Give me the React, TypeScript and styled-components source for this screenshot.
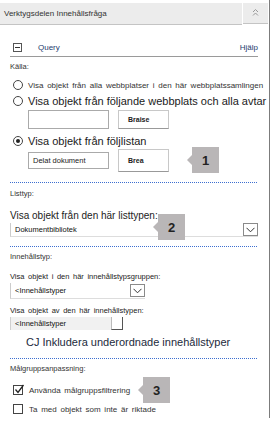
import React from "react";
import styled, { createGlobalStyle } from "styled-components";

const Global = createGlobalStyle`
  body {
    margin: 0;
    background: #fff;
    font-family: "Liberation Sans", Arial, sans-serif;
    color: #222;
  }
`;

const Panel = styled.div`
  width: 270px;
  height: 418px;
  border-right: 1px solid #7c7c7c;
  padding-top: 3px;
  box-sizing: border-box;
`;

const Header = styled.div`
  display: flex;
  gap: 1px;
  margin-right: 1px;
`;

const HeaderTitle = styled.div`
  flex: 1;
  height: 21px;
  background: #ececec;
  border-bottom: 1px solid #c4c4c4;
  display: flex;
  align-items: center;
  padding-left: 4px;
  font-size: 8px;
  color: #333;
`;

const HeaderButton = styled.div`
  width: 25px;
  height: 21px;
  background: #ececec;
  border-bottom: 1px solid #c4c4c4;
  display: flex;
  justify-content: center;
  padding-top: 5px;
  box-sizing: border-box;
`;

const Body = styled.div`
  padding: 0 11px 0 10px;
`;

const QueryRow = styled.div`
  margin-top: 14px;
  height: 16px;
  border-bottom: 1px solid #9a9a9a;
  display: flex;
  align-items: center;
  padding: 0 0 1px 3px;
  font-size: 8px;
  color: #1e3c6e;
`;

const MinusBox = styled.span`
  width: 7px;
  height: 7px;
  border: 1px solid #555;
  position: relative;
  margin-right: 16px;
  &::after {
    content: "";
    position: absolute;
    left: 1px;
    right: 1px;
    top: 3px;
    height: 1px;
    background: #333;
  }
`;

const Grow = styled.span`
  flex: 1;
`;

const SectionLabel = styled.div<{ $top: number }>`
  margin-top: ${(p) => p.$top}px;
  height: 10px;
  line-height: 10px;
  font-size: 7.5px;
  color: #333;
`;

const Option = styled.div<{ $top: number; $big?: boolean }>`
  margin-top: ${(p) => p.$top}px;
  display: flex;
  align-items: center;
  height: ${(p) => (p.$big ? 16 : 12)}px;
  padding-left: 3px;
  font-size: ${(p) => (p.$big ? 11 : 8)}px;
  word-spacing: ${(p) => (p.$big ? 0 : 1.5)}px;
  color: ${(p) => (p.$big ? "#1a1a1a" : "#333")};
  white-space: nowrap;
  position: relative;
`;

const Radio = styled.span<{ $checked?: boolean }>`
  width: 8px;
  height: 8px;
  border-radius: 50%;
  border: 1px solid #444;
  margin-right: 5px;
  flex-shrink: 0;
  display: flex;
  align-items: center;
  justify-content: center;
  &::after {
    content: "";
    width: 4px;
    height: 4px;
    border-radius: 50%;
    background: ${(p) => (p.$checked ? "#222" : "transparent")};
  }
`;

const Check = styled.span`
  width: 8px;
  height: 8px;
  border: 1px solid #444;
  margin-right: 6px;
  flex-shrink: 0;
  position: relative;
  svg {
    position: absolute;
    left: 0;
    top: -2px;
  }
`;

const InputRow = styled.div<{ $top: number; $h: number }>`
  margin-top: ${(p) => p.$top}px;
  display: flex;
  align-items: center;
  gap: 9px;
  padding-left: 18px;
  height: ${(p) => p.$h}px;
`;

const TextBox = styled.div<{ $h: number }>`
  width: 81px;
  height: ${(p) => p.$h}px;
  border: 1px solid #aaa;
  font-size: 7.5px;
  display: flex;
  align-items: center;
  padding-left: 4px;
  box-sizing: border-box;
  color: #222;
`;

const Button = styled.div<{ $h: number }>`
  width: 51px;
  height: ${(p) => p.$h}px;
  border: 1px solid #c8c8c8;
  border-bottom-color: #999;
  box-sizing: border-box;
  font-size: 7px;
  font-weight: bold;
  padding-left: 9px;
  display: flex;
  align-items: center;
  color: #222;
`;

const Callout = styled.div<{ $left?: number; $top?: number; $abs?: boolean }>`
  position: ${(p) => (p.$abs ? "absolute" : "relative")};
  left: ${(p) => (p.$abs ? `${p.$left}px` : "auto")};
  top: ${(p) => (p.$abs ? `${p.$top}px` : "auto")};
  margin-left: ${(p) => (p.$abs ? 0 : 14)}px;
  width: 27px;
  height: 26px;
  background: #b9b6b7;
  display: flex;
  align-items: center;
  justify-content: center;
  font-size: 13px;
  font-weight: bold;
  color: #222;
  z-index: 1;
  &::before {
    content: "";
    position: absolute;
    left: -5px;
    top: 8px;
    border-top: 5px solid transparent;
    border-bottom: 5px solid transparent;
    border-right: 5px solid #b9b6b7;
  }
`;

const Dotted = styled.div<{ $top: number }>`
  margin-top: ${(p) => p.$top}px;
  border-top: 1px dotted #3d6fd0;
  margin-right: 1px;
`;

const FieldLabel = styled.div<{ $top: number; $big?: boolean }>`
  margin-top: ${(p) => p.$top}px;
  height: ${(p) => (p.$big ? 12 : 10)}px;
  line-height: ${(p) => (p.$big ? 12 : 10)}px;
  font-size: ${(p) => (p.$big ? 10 : 7.5)}px;
  word-spacing: ${(p) => (p.$big ? 0 : 1.5)}px;
  color: #222;
  white-space: nowrap;
`;

const Select = styled.div<{ $w: number; $h: number }>`
  position: relative;
  width: ${(p) => p.$w}px;
  height: ${(p) => p.$h}px;
  border-left: 1px solid #ccc;
  border-bottom: 1px solid #ddd;
  display: flex;
  align-items: center;
  box-sizing: border-box;
  font-size: 7.5px;
  color: #111;
  padding-left: 4px;
  margin-top: 1px;
`;

const SelectArrow = styled.span`
  width: 15px;
  height: 13px;
  border: 1px solid #8a8a8a;
  box-sizing: border-box;
  display: flex;
  align-items: center;
  justify-content: center;
  background: #fff;
`;

const ListBox = styled.div`
  margin-top: 1px;
  width: 113px;
  height: 13px;
  background: #f1f1f1;
  border-left: 1px solid #d0d0d0;
  display: flex;
  align-items: center;
  font-size: 7.5px;
  padding-left: 4px;
  box-sizing: border-box;
  color: #111;
`;

const ListScroll = styled.span`
  width: 12px;
  height: 13px;
  background: #fff;
  border-left: 1px solid #bbb;
  border-right: 1px solid #555;
  border-bottom: 1px solid #555;
  box-sizing: border-box;
`;

const Include = styled.div`
  margin-top: 5px;
  padding-left: 16px;
  height: 14px;
  line-height: 14px;
  font-size: 11px;
  color: #1c2a3c;
  white-space: nowrap;
`;

const Chevrons = () => (
  <svg width="7" height="8" viewBox="0 0 7 8">
    <path d="M1 4 L3.5 1.5 L6 4 M1 7.5 L3.5 5 L6 7.5" stroke="#999" strokeWidth="1" fill="none" />
  </svg>
);

const Down = () => (
  <svg width="9" height="6" viewBox="0 0 9 6">
    <path d="M0.5 0.8 L4.5 4.8 L8.5 0.8" stroke="#333" strokeWidth="1" fill="none" />
  </svg>
);

const Tick = () => (
  <svg width="11" height="11" viewBox="0 0 11 11">
    <path d="M1.5 5.5 L4 8.5 L9.5 1" stroke="#222" strokeWidth="1.3" fill="none" />
  </svg>
);

export default function App() {
  return (
    <>
      <Global />
      <Panel>
        <Header>
          <HeaderTitle>Verktygsdelen Innehållsfråga</HeaderTitle>
          <HeaderButton>
            <Chevrons />
          </HeaderButton>
        </Header>
        <Body>
          <QueryRow>
            <MinusBox />
            <Grow>Query</Grow>
            <span>Hjälp</span>
          </QueryRow>

          <SectionLabel $top={5}>Källa:</SectionLabel>
          <Option $top={7}>
            <Radio />
            Visa objekt från alla webbplatser i den här webbplatssamlingen
          </Option>
          <Option $top={2} $big>
            <Radio />
            Visa objekt från följande webbplats och alla avtar
          </Option>
          <InputRow $top={-5} $h={30}>
            <TextBox $h={19} />
            <Button $h={19}>Braise</Button>
          </InputRow>
          <Option $top={-1} $big>
            <Radio $checked />
            Visa objekt från följlistan
          </Option>
          <InputRow $top={-2} $h={26}>
            <TextBox $h={17}>Delat dokument</TextBox>
            <Button $h={23}>Brea</Button>
            <Callout>1</Callout>
          </InputRow>
          <Dotted $top={9} />

          <SectionLabel $top={6}>Listtyp:</SectionLabel>
          <FieldLabel $top={11} $big>
            Visa objekt från den här listtypen:
          </FieldLabel>
          <Select $w={248} $h={14}>
            <Grow>Dokumentbibliotek</Grow>
            <SelectArrow>
              <Down />
            </SelectArrow>
            <Callout $abs $left={147} $top={-9}>
              2
            </Callout>
          </Select>
          <Dotted $top={9} />

          <SectionLabel $top={5}>Innehållstyp:</SectionLabel>
          <FieldLabel $top={10}>Visa objekt i den här innehållstypsgruppen:</FieldLabel>
          <Select $w={135} $h={16}>
            <Grow>&lt;Innehållstyper</Grow>
            <SelectArrow>
              <Down />
            </SelectArrow>
          </Select>
          <FieldLabel $top={7}>Visa objekt av den här innehållstypen:</FieldLabel>
          <ListBox>
            <Grow>&lt;Innehållstyper</Grow>
            <ListScroll />
          </ListBox>
          <Include>CJ Inkludera underordnade innehållstyper</Include>
          <Dotted $top={9} />

          <SectionLabel $top={5}>Målgruppsanpassning:</SectionLabel>
          <Option $top={10}>
            <Check>
              <Tick />
            </Check>
            Använda målgruppsfiltrering
            <Callout $abs $left={133} $top={-7}>
              3
            </Callout>
          </Option>
          <Option $top={7}>
            <Check />
            Ta med objekt som inte är riktade
          </Option>
        </Body>
      </Panel>
    </>
  );
}
